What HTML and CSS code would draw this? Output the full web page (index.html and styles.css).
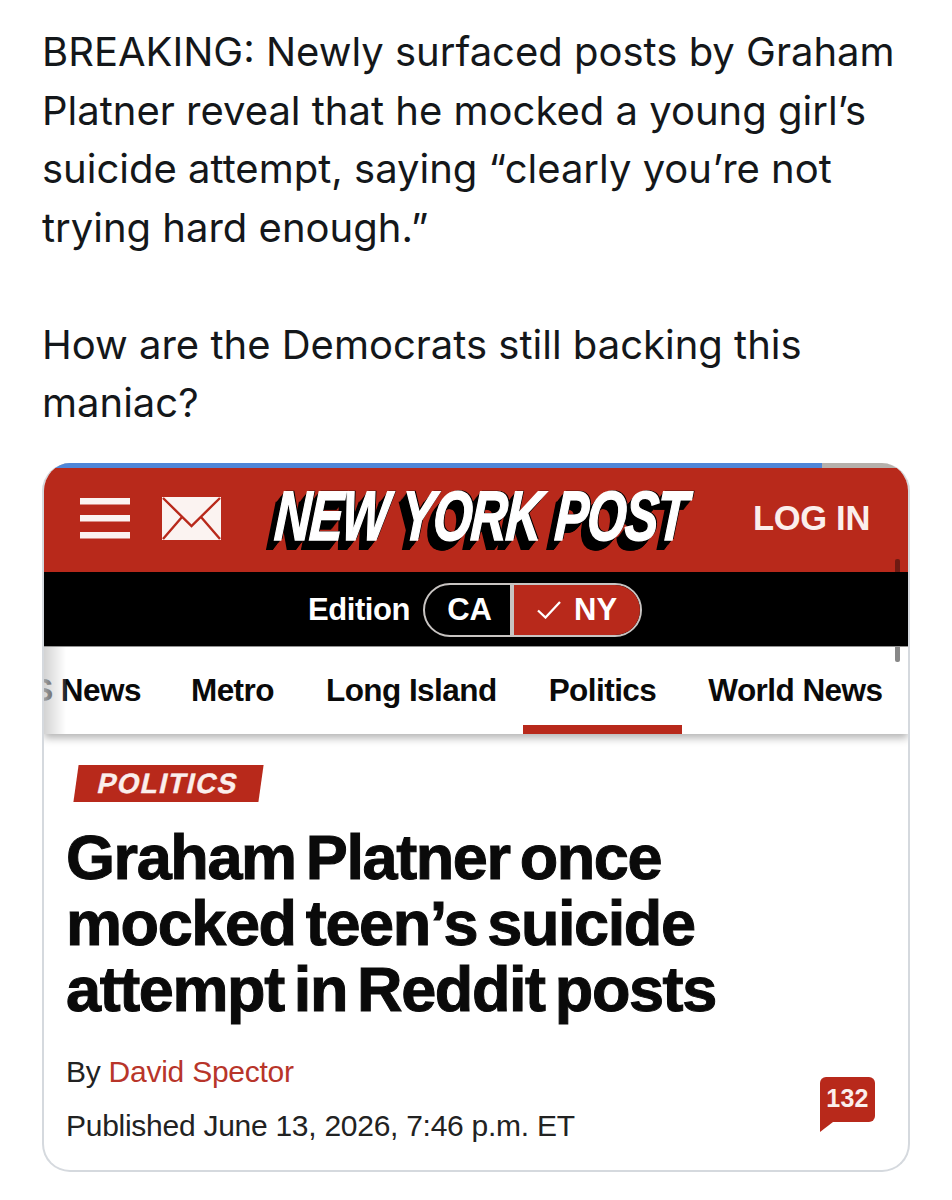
FILE: index.html
```html
<!DOCTYPE html>
<html lang="en">
<head>
<meta charset="utf-8">
<title>Tweet</title>
<link rel="stylesheet" href="styles.css">
</head>
<body>
<main class="page">
  <div class="tweet">
    <p>BREAKING: Newly surfaced posts by Graham<br>Platner reveal that he mocked a young girl’s<br>suicide attempt, saying “clearly you’re not<br>trying hard enough.”</p>
    <p class="second">How are the Democrats still backing this<br>maniac?</p>
  </div>
  <section class="card">
    <div class="progress"><div class="progress-fill"></div></div>
    <header class="masthead">
      <svg class="burger" width="50" height="42" viewBox="0 0 50 42"><rect width="50" height="6.5" y="0" fill="#fbf3f1"/><rect width="50" height="6.5" y="17" fill="#fbf3f1"/><rect width="50" height="6.5" y="34" fill="#fbf3f1"/></svg>
      <svg class="mail" width="59" height="43" viewBox="0 0 59 43"><rect width="59" height="43" fill="#fbf3f1"/><path d="M1 1 L29.5 29 L58 1 M1 42 L20 20 M58 42 L39 20" fill="none" stroke="#b8291b" stroke-width="2.4"/></svg>
      <div class="logo"><span class="logo-text">NEW YORK POST</span></div>
      <span class="login">LOG IN</span>
      <span class="scroll-red"></span>
    </header>
    <div class="edition">
      <span class="edition-label">Edition</span>
      <div class="switch">
        <span class="opt-ca">CA</span>
        <span class="opt-ny"><svg width="24" height="18" viewBox="0 0 24 18"><path d="M1 9.5 L8.5 16.5 L23 1" fill="none" stroke="#fff" stroke-width="2.3"/></svg>NY</span>
      </div>
    </div>
    <nav class="nav">
      <span class="nav-item first">US News</span>
      <span class="nav-item">Metro</span>
      <span class="nav-item">Long Island</span>
      <span class="nav-item active">Politics</span>
      <span class="nav-item">World News</span>
      <span class="fade"></span>
      <span class="scroll-gray"></span>
    </nav>
    <article class="article">
      <div class="tag"><span>POLITICS</span></div>
      <h1>Graham Platner once<br>mocked teen’s suicide<br>attempt in Reddit posts</h1>
      <div class="meta">
        <div class="meta-text">
          <div class="by">By <span class="author">David Spector</span></div>
          <div class="date">Published June 13, 2026, 7:46 p.m. ET</div>
        </div>
        <div class="comments">
          <span class="count">132</span>
          <svg class="tail" width="13" height="10" viewBox="0 0 13 10"><path d="M0 0 H13 L0 10 Z" fill="#b8291b"/></svg>
        </div>
      </div>
    </article>
  </section>
</main>
</body>
</html>
```
FILE: styles.css
```css
* { box-sizing: border-box; }
html, body { margin: 0; padding: 0; background: #fff; }
.page { width: 952px; height: 1200px; overflow: hidden; padding: 23px 42px 0; }
.tweet { font-family: Inter, "Liberation Sans", sans-serif; font-size: 40px; line-height: 58.5px; color: #14171a; height: 440px; }
.tweet p { margin: 0; }
.tweet .second { margin-top: 58.5px; }
.card { width: 868px; height: 709px; border: 2px solid #d5d9de; border-top: 0; border-radius: 28px; overflow: hidden; background: #fff; position: relative; font-family: "Liberation Sans", Arial, sans-serif; }
.progress { height: 5px; background: #b5b0ab; }
.progress-fill { height: 5px; width: 778px; background: #4f86d8; }
.masthead { height: 104px; background: #b8291b; display: flex; align-items: center; padding: 0 38px 0 36px; position: relative; }
.burger { margin-right: 32px; margin-top: -3px; }
.mail { margin-right: 0; margin-top: -4px; }
.logo { width: 460px; height: 70px; display: flex; align-items: center; margin-left: 54px; margin-top: -8px; }
.logo-text { display: inline-block; font-weight: 700; font-style: italic; font-size: 70px; white-space: nowrap; color: #fff; letter-spacing: -2px; word-spacing: 2px; transform: scaleX(.72) skewX(-5deg); transform-origin: left center; -webkit-text-stroke: 1.5px #fff; text-shadow: 2px -1px 0 #000, -1px 1px 0 #000, -2px 2px 0 #000, -3px 3px 0 #000, -4px 4px 0 #000, -5px 5px 0 #000, -6px 6px 0 #000, -7px 7px 0 #000, -8px 8px 0 #000, -9px 9px 0 #000, -10px 10px 0 #000, -11px 10px 0 #000; }
.login { position: absolute; right: 38px; top: 31px; color: #fbeeec; font-weight: 700; font-size: 34.5px; line-height: 38px; letter-spacing: -.3px; }
.scroll-red { position: absolute; right: 8px; top: 91px; width: 5px; height: 13px; background: #6f1a12; border-radius: 2px 2px 0 0; }
.edition { height: 75px; background: #000; display: flex; align-items: center; justify-content: center; gap: 13px; padding-top: 2px; padding-right: 2px; border-bottom: 1px solid #999; }
.edition-label { color: #fff; font-weight: 700; font-size: 31px; letter-spacing: -.4px; }
.switch { display: flex; height: 54px; width: 219px; border: 2px solid #c8c4c2; border-radius: 27px; overflow: hidden; }
.opt-ca { width: 89px; flex: none; color: #fff; font-weight: 700; font-size: 31px; display: flex; align-items: center; justify-content: center; padding-left: 4px; border-right: 4px solid #c8c4c2; }
.opt-ny { flex: 1; background: #b8291b; color: #fff; font-weight: 700; font-size: 31px; display: flex; align-items: center; justify-content: center; gap: 13px; }
.nav { height: 87px; background: #fff; display: flex; align-items: flex-start; position: relative; overflow: hidden; box-shadow: 0 4px 8px rgba(0,0,0,.3); z-index: 1; }
.nav-item { font-weight: 700; font-size: 31.5px; line-height: 34px; letter-spacing: -.55px; color: #0a0a0a; padding: 26px 26px 0; height: 87px; white-space: nowrap; flex: none; position: relative; }
.nav-item.first { margin-left: -34px; padding: 26px 24px 0 0; }
.nav-item.active::after { content: ""; position: absolute; left: 0; right: 0; bottom: 0; height: 9px; background: #b8291b; }
.fade { position: absolute; left: 0; top: 0; bottom: 0; width: 22px; background: linear-gradient(90deg, rgba(200,200,200,.8), rgba(255,255,255,.1)); }
.scroll-gray { position: absolute; right: 8px; top: 0; width: 5px; height: 15px; background: #888; border-radius: 0 0 2px 2px; }
.article { padding: 31px 0 0 22px; position: relative; }
.tag { width: 185px; height: 37px; background: #b8291b; transform: skewX(-8deg); margin-left: 10px; display: flex; align-items: center; justify-content: center; }
.tag span { display: block; color: #fbeeec; font-weight: 700; font-size: 28px; letter-spacing: 1.4px; transform: skewX(-5deg); -webkit-text-stroke: .4px #fbeeec; }
h1 { margin: 22px 0 0; font-size: 63px; line-height: 66px; font-weight: 700; letter-spacing: -1.4px; word-spacing: -6px; color: #0a0a0a; -webkit-text-stroke: 1px #0a0a0a; }
.meta { margin-top: 23px; display: flex; justify-content: space-between; align-items: flex-start; padding-right: 33px; }
.by { font-size: 30px; line-height: 54px; color: #222; letter-spacing: -.25px; }
.author { color: #b8352a; }
.date { font-size: 30px; line-height: 54px; color: #222; letter-spacing: -.27px; }
.comments { margin-top: 32px; position: relative; width: 55px; }
.count { display: block; width: 55px; height: 45px; background: #b8291b; border-radius: 6px 6px 6px 0; color: #fbeeec; font-weight: 700; font-size: 25px; line-height: 42px; text-align: center; letter-spacing: .2px; }
.tail { display: block; }
```
